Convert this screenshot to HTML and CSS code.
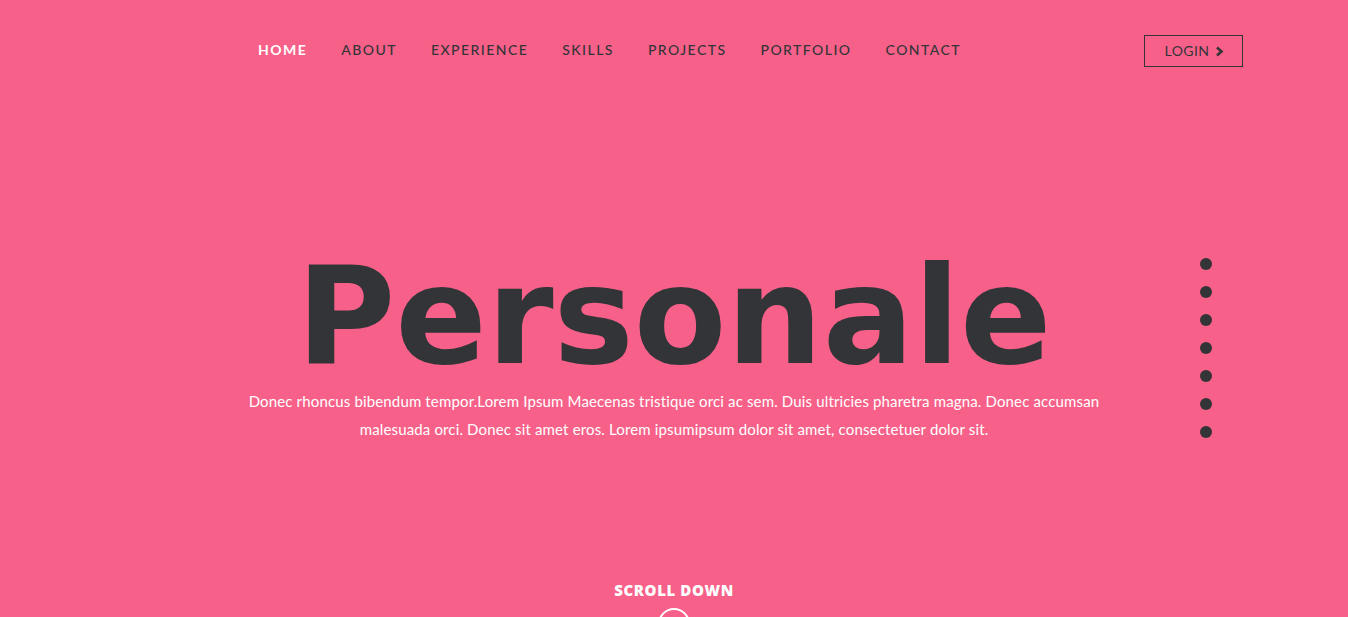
FILE: index.html
```html
<!DOCTYPE html>
<html lang="en">
<head>
<meta charset="utf-8">
<title>Personale</title>
<link rel="stylesheet" href="styles.css">
</head>
<body>
<div class="page">
  <header class="header">
    <nav class="nav">
      <a class="nav-link active" href="#">HOME</a>
      <a class="nav-link" href="#">ABOUT</a>
      <a class="nav-link" href="#">EXPERIENCE</a>
      <a class="nav-link" href="#">SKILLS</a>
      <a class="nav-link" href="#">PROJECTS</a>
      <a class="nav-link" href="#">PORTFOLIO</a>
      <a class="nav-link" href="#">CONTACT</a>
    </nav>
    <a class="login" href="#">LOGIN
      <svg class="chev" width="9" height="11" viewBox="0 0 9 11"><path d="M2 1.5 L6.5 5.5 L2 9.5" fill="none" stroke="currentColor" stroke-width="2.6"/></svg>
    </a>
  </header>
  <main class="hero">
    <h1 class="title">Personale</h1>
    <p class="lead">Donec rhoncus bibendum tempor.Lorem Ipsum Maecenas tristique orci ac sem. Duis ultricies pharetra magna. Donec accumsan malesuada orci. Donec sit amet eros. Lorem ipsumipsum dolor sit amet, consectetuer dolor sit.</p>
    <ul class="dots">
      <li></li><li></li><li></li><li></li><li></li><li></li><li></li>
    </ul>
  </main>
  <div class="scroll">
    <span class="scroll-label">SCROLL DOWN</span>
    <span class="scroll-circle"></span>
  </div>
</div>
</body>
</html>
```
FILE: styles.css
```css
* { box-sizing: border-box; }
html, body { margin: 0; padding: 0; }
body {
  background: #f76189;
  color: #333438;
  font-family: "Lato", "Open Sans", sans-serif;
  overflow: hidden;
}
.page {
  height: 617px;
  display: flex;
  flex-direction: column;
}
.header {
  width: 1140px;
  margin: 0 auto;
  display: flex;
  align-items: center;
  padding-top: 35px;
  height: 67px;
}
.nav {
  display: flex;
  gap: 34px;
  margin-left: 154px;
  margin-top: -4px;
}
.nav-link {
  color: #333438;
  text-decoration: none;
  font-size: 14px;
  font-weight: 500;
  letter-spacing: 1.45px;
}
.nav-link.active { color: #fff; font-weight: 700; }
.login {
  margin-left: auto;
  width: 99px;
  height: 32px;
  border: 1px solid #333438;
  display: flex;
  align-items: center;
  justify-content: center;
  gap: 6px;
  color: #333438;
  text-decoration: none;
  font-size: 14px;
  letter-spacing: 0.4px;
  padding-left: 2px;
  padding-bottom: 1px;
  margin-right: 1px;
}
.chev { margin-top: 1px; }
.hero {
  position: relative;
  display: flex;
  flex-direction: column;
  align-items: center;
  padding-top: 190px;
}
.title {
  margin: 0;
  font-family: "DejaVu Sans", sans-serif;
  font-weight: 700;
  font-size: 135px;
  line-height: 120px;
  letter-spacing: 0;
}
.lead {
  margin: 0;
  width: 880px;
  text-align: center;
  color: #fff;
  font-size: 15px;
  letter-spacing: 0.15px;
  line-height: 28px;
  margin-top: 10px;
}
.dots {
  position: absolute;
  right: 136px;
  top: 191px;
  margin: 0;
  padding: 0;
  list-style: none;
  display: flex;
  flex-direction: column;
  gap: 16px;
}
.dots li {
  width: 12px;
  height: 12px;
  border-radius: 50%;
  background: #333438;
}
.scroll {
  margin-top: auto;
  display: flex;
  flex-direction: column;
  align-items: center;
  gap: 8px;
  height: 37px;
}
.scroll-label {
  color: #fff;
  font-family: "Open Sans", sans-serif;
  font-weight: 800;
  font-size: 15px;
  letter-spacing: 0.6px;
}
.scroll-circle {
  width: 32px;
  height: 32px;
  border: 2px solid #fff;
  border-radius: 50%;
  flex: none;
}
```
